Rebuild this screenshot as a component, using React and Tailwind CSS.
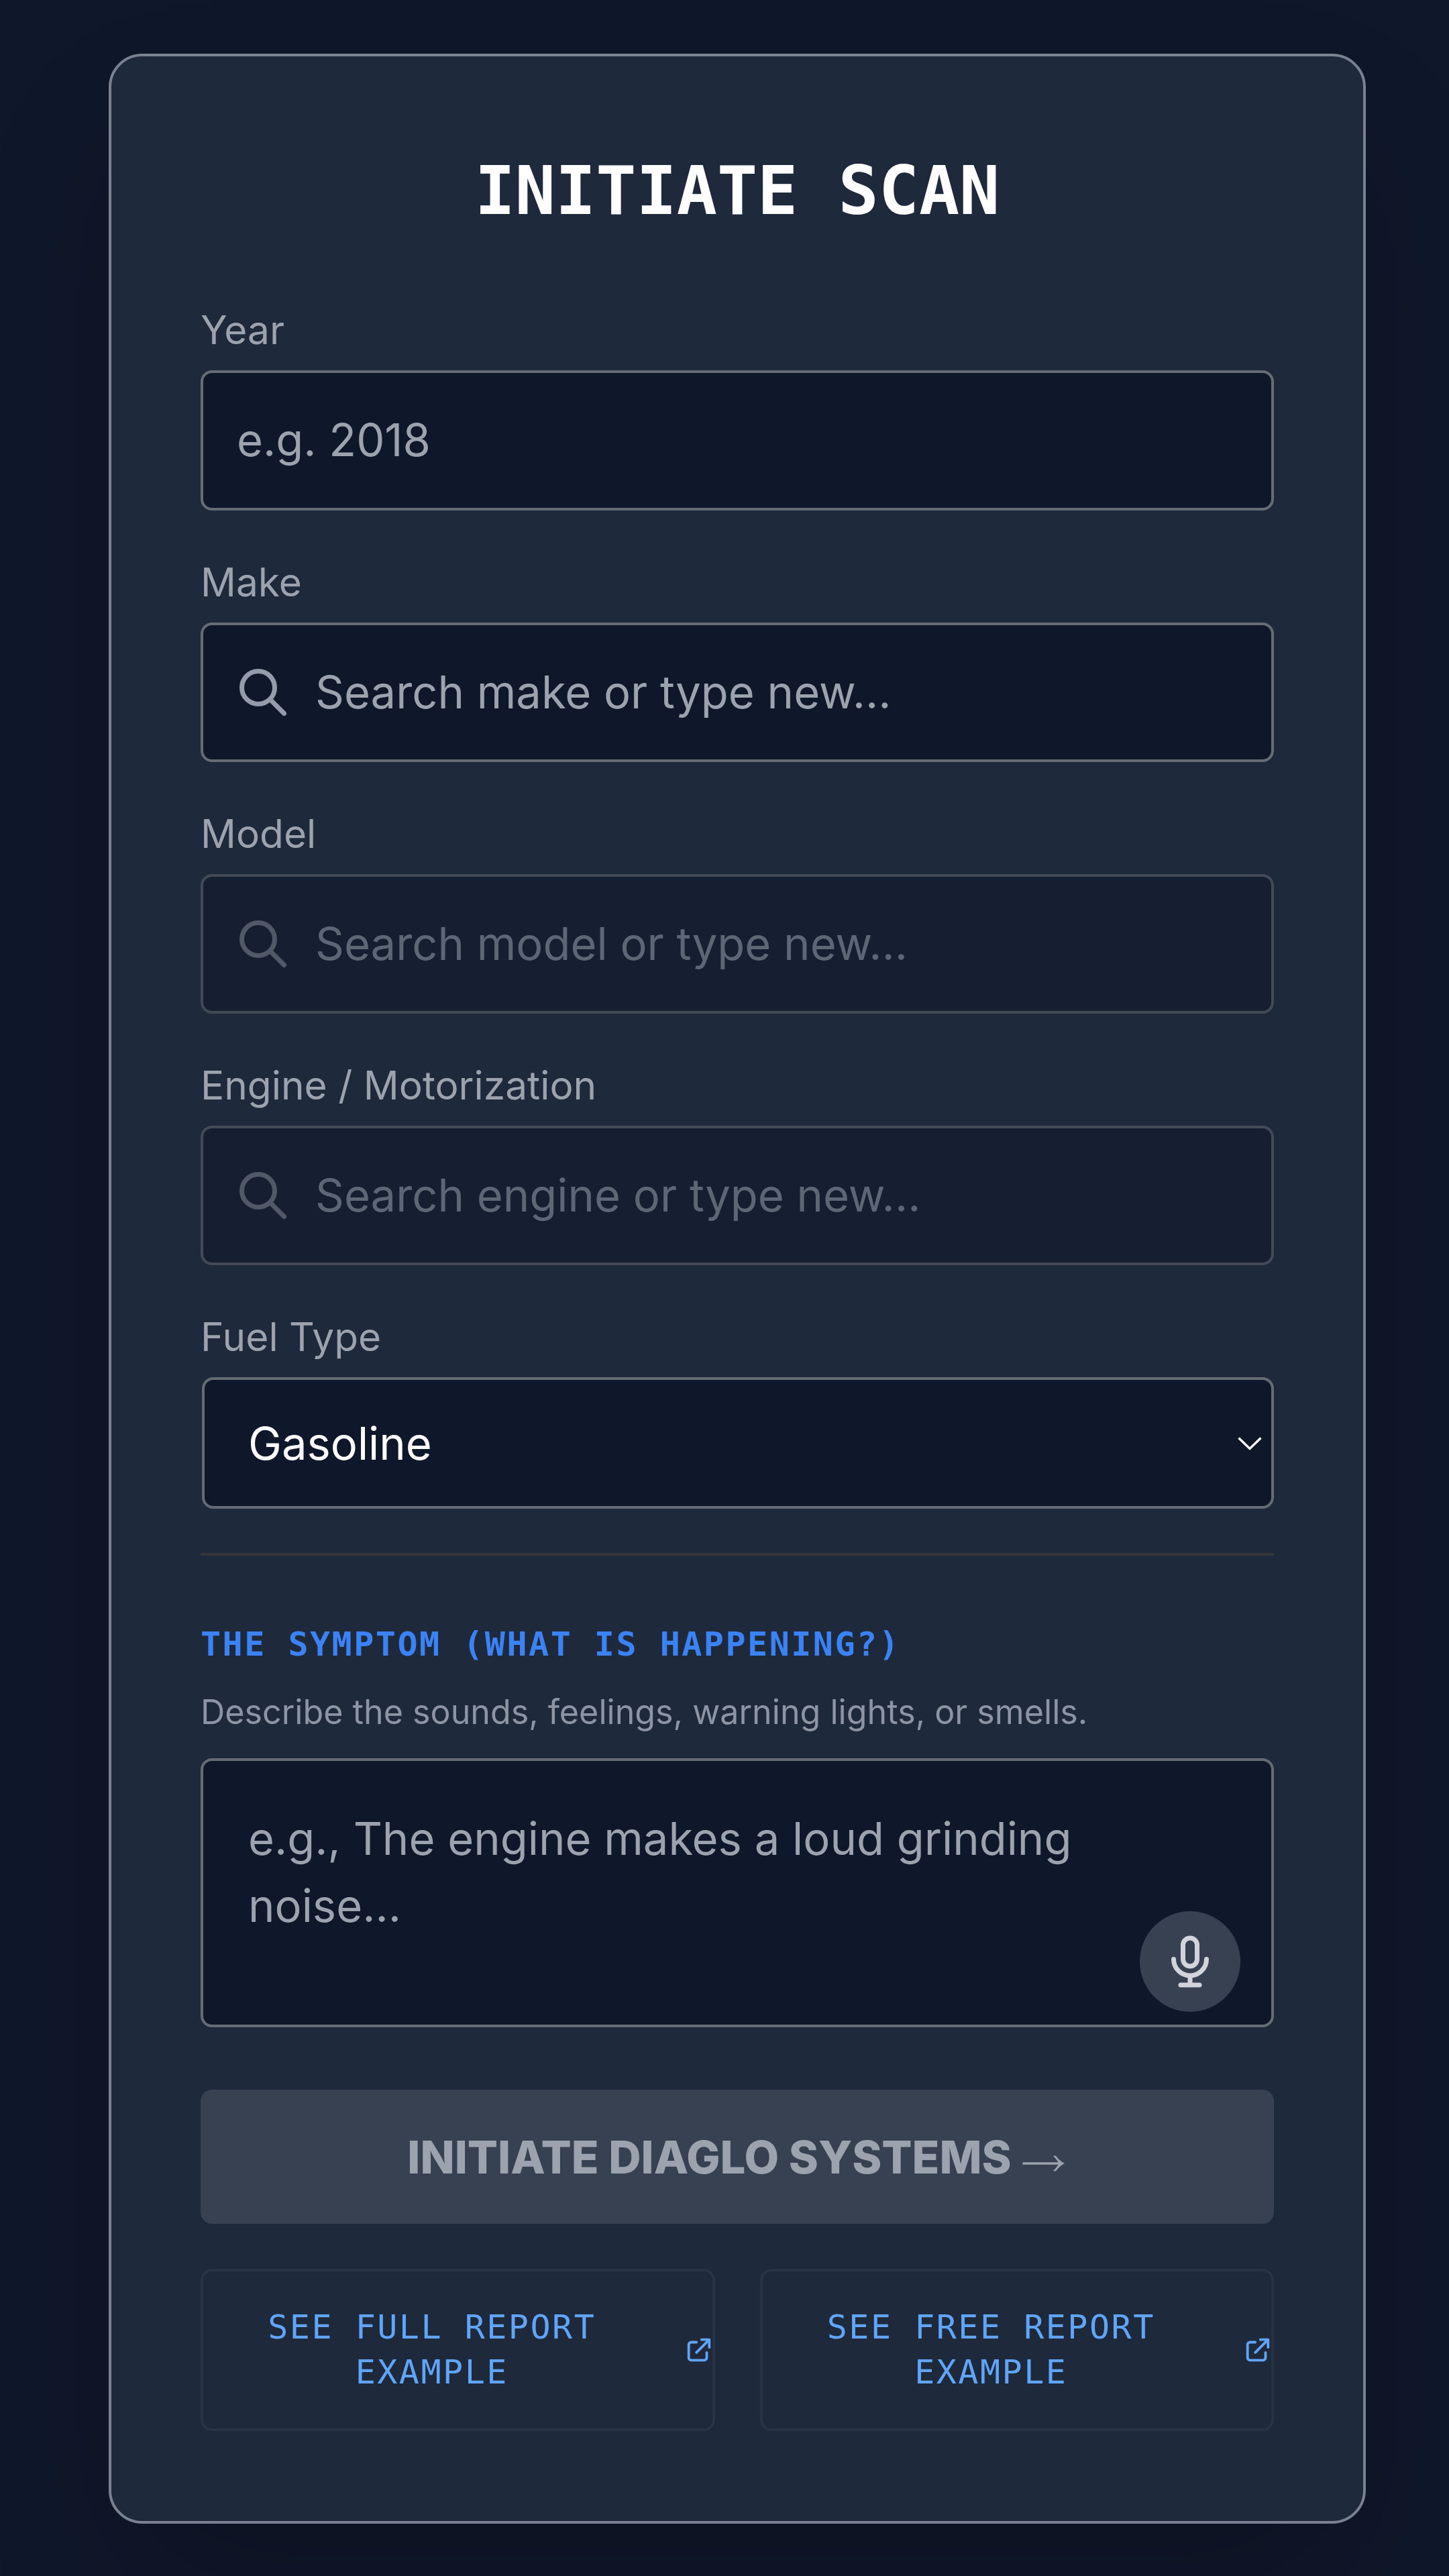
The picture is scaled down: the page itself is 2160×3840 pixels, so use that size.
import { useState } from 'react'

const SearchIcon = ({ className }) => (
  <svg className={className} fill="none" stroke="currentColor" viewBox="0 0 24 24" strokeWidth={2} strokeLinecap="round" strokeLinejoin="round">
    <path d="M21 21l-6-6m2-5a7 7 0 11-14 0 7 7 0 0114 0z" />
  </svg>
)

const MicIcon = () => (
  <svg className="w-[84px] h-[84px]" fill="none" stroke="currentColor" viewBox="0 0 24 24" strokeWidth={2} strokeLinecap="round" strokeLinejoin="round">
    <path d="M19 11a7 7 0 01-7 7m0 0a7 7 0 01-7-7m7 7v4m0 0H8m4 0h4m-4-8a3 3 0 01-3-3V5a3 3 0 116 0v6a3 3 0 01-3 3z" />
  </svg>
)

const ExternalIcon = () => (
  <svg className="w-[46px] h-[46px] -mr-[3px] shrink-0" fill="none" stroke="currentColor" viewBox="0 0 24 24" strokeWidth={2} strokeLinecap="round" strokeLinejoin="round">
    <path d="M10 6H6a2 2 0 00-2 2v10a2 2 0 002 2h10a2 2 0 002-2v-4M14 4h6m0 0v6m0-6L10 14" />
  </svg>
)

const ArrowIcon = () => (
  <svg className="w-[67px] h-[24px] mt-[17px]" viewBox="0 0 67 24" fill="currentColor">
    <path d="M0.5 10.3H53.5C51.5 7 49 4 46.3 1.3L46.8 0.5H49.8C53.5 5.6 57.5 9.2 63 12 57.5 14.8 53.5 18.4 49.8 23.5H46.8L46.3 22.7C49 20 51.5 17 53.5 13.7H0.5z" />
  </svg>
)

const searchFields = [
  { id: 'make', label: 'Make', placeholder: 'Search make or type new...', disabled: false },
  { id: 'model', label: 'Model', placeholder: 'Search model or type new...', disabled: true },
  { id: 'engine', label: 'Engine / Motorization', placeholder: 'Search engine or type new...', disabled: true },
]

const examples = ['See Full Report Example', 'See Free Report Example']

const Label = ({ htmlFor, children }) => (
  <label htmlFor={htmlFor} className="block mb-[19px] text-[58.6px] leading-[83px] text-[#9ca3af]">
    {children}
  </label>
)

export default function App() {
  const [year, setYear] = useState('')
  const [fuel, setFuel] = useState('Gasoline')
  const [symptom, setSymptom] = useState('')

  return (
    <div className="w-[2160px] h-[3840px] overflow-hidden bg-[#0f172a] pt-[80px] pl-[162px] font-['Inter',sans-serif]">
      <div className="w-[1874px] h-[3682px] p-[133px] bg-[#1e293b] border-4 border-[#7a8190] rounded-[50px] shadow-[0_104px_208px_-50px_rgba(0,0,0,0.25)]">
        <h2 className="pt-px mb-[99px] text-center text-[100px] leading-[133px] font-bold text-white uppercase font-['DejaVu_Sans_Mono',monospace]">
          Initiate Scan
        </h2>

        <div className="flex flex-col gap-[65px]">
          <div>
            <Label htmlFor="year">Year</Label>
            <input
              id="year"
              value={year}
              onChange={(e) => setYear(e.target.value)}
              placeholder="e.g. 2018"
              className="block w-full h-[209px] px-[50px] pb-[2px] text-[66.9px] text-white placeholder:text-[#9ca3af] bg-[#0f172a] border-4 border-[#666c75] rounded-[17px]"
            />
          </div>

          {searchFields.map((field) => (
            <div key={field.id}>
              <Label htmlFor={field.id}>{field.label}</Label>
              <div className="relative">
                <input
                  id={field.id}
                  disabled={field.disabled}
                  placeholder={field.placeholder}
                  className="block w-full h-[208px] pl-[167px] pr-[50px] pb-[2px] text-[66.9px] text-white placeholder:text-[#9ca3af] bg-[#0f172a] border-4 border-[#666c75] rounded-[17px] disabled:opacity-50"
                />
                <SearchIcon
                  className={`absolute left-[51px] top-[62px] w-[84px] h-[84px] ${field.disabled ? 'text-[#515969]' : 'text-[#949bab]'}`}
                />
              </div>
            </div>
          ))}

          <div>
            <Label htmlFor="fuel">Fuel Type</Label>
            <div className="relative ml-[2px]">
              <select
                id="fuel"
                value={fuel}
                onChange={(e) => setFuel(e.target.value)}
                className="block w-full h-[196px] px-[65px] pt-[2px] appearance-none text-[66.9px] text-white bg-[#0f172a] border-4 border-[#666c75] rounded-[17px]"
              >
                <option>Gasoline</option>
                <option>Diesel</option>
                <option>Hybrid</option>
                <option>Electric</option>
              </select>
              <svg className="absolute right-[18px] top-[89px] w-[36px] h-[20px] text-white" viewBox="0 0 36 20" fill="none" stroke="currentColor" strokeWidth={3.4}>
                <path d="M1.5 1.5L18 17.5 34.5 1.5" />
              </svg>
            </div>
          </div>
        </div>

        <div className="mt-[66px] pt-[99px] border-t-4 border-[#34363c]">
          <h3 className="text-[50px] leading-[67px] font-bold tracking-[0.05em] text-[#3b82f6] uppercase font-['DejaVu_Sans_Mono',monospace]">
            The Symptom (What is happening?)
          </h3>
          <p className="mt-[33px] mb-[36px] text-[50.2px] leading-[67px] text-[#8d94a3]">
            Describe the sounds, feelings, warning lights, or smells.
          </p>
          <div className="relative">
            <textarea
              value={symptom}
              onChange={(e) => setSymptom(e.target.value)}
              placeholder="e.g., The engine makes a loud grinding noise..."
              className="block w-full h-[401px] px-[67px] pt-[66px] resize-none overflow-hidden text-[66.9px] leading-[100.4px] text-white placeholder:text-[#9ca3af] bg-[#0f172a] border-4 border-[#666c75] rounded-[17px]"
            />
            <button className="absolute right-[50px] bottom-[23px] flex items-center justify-center w-[150px] h-[150px] rounded-full bg-[#374151] text-[#d1d5db]">
              <MicIcon />
            </button>
          </div>
        </div>

        <button disabled className="flex items-center justify-center gap-[16px] mt-[93px] w-full h-[200px] pt-[2px] rounded-[17px] bg-[#374151] text-[66.9px] font-extrabold text-[#9ca3af] uppercase">
          Initiate Diaglo Systems
          <ArrowIcon />
        </button>

        <div className="mt-[67px] grid grid-cols-2 gap-[67px]">
          {examples.map((text) => (
            <a key={text} href="#" className="flex items-center gap-[34px] py-[50px] border-4 border-[#283343] rounded-[17px] text-[50px] leading-[67px] tracking-[0.05em] text-[#60a5fa] uppercase font-['DejaVu_Sans_Mono',monospace]">
              <span className="flex-1 text-center">{text}</span>
              <ExternalIcon />
            </a>
          ))}
        </div>
      </div>
    </div>
  )
}
